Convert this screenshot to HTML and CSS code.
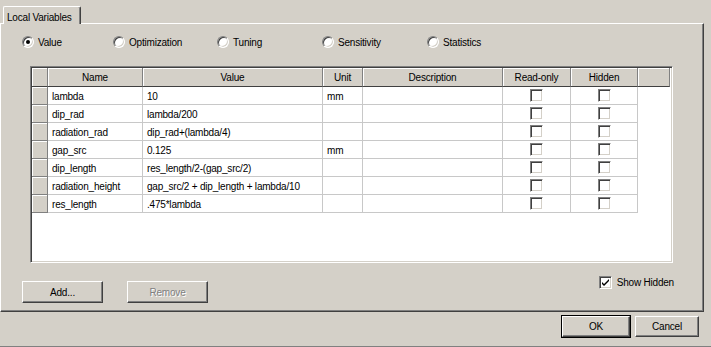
FILE: index.html
```html
<!DOCTYPE html>
<html>
	<head>
		<meta charset="UTF-8">
		<title>Local Variables</title>
		<link rel="stylesheet" href="styles.css">
	</head>
	<body>
		<div class="dialog">
			<div class="tabs">
				<div class="tab">Local Variables</div>
			</div>
			<div class="panel">
				<div class="modes">
					<label class="mode mode-value"><span class="radio checked"></span>Value</label>
					<label class="mode mode-opt"><span class="radio"></span>Optimization</label>
					<label class="mode"><span class="radio"></span>Tuning</label>
					<label class="mode"><span class="radio"></span>Sensitivity</label>
					<label class="mode"><span class="radio"></span>Statistics</label>
				</div>

				<div class="grid-box">
					<div class="grid">
						<div class="hd"></div>
						<div class="hd">Name</div>
						<div class="hd">Value</div>
						<div class="hd">Unit</div>
						<div class="hd">Description</div>
						<div class="hd">Read-only</div>
						<div class="hd">Hidden</div>
						<div class="hd"></div>

						<div class="rh"></div><div class="c">lambda</div><div class="c">10</div><div class="c">mm</div><div class="c"></div><div class="c chk"><span class="box"></span></div><div class="c chk"><span class="box"></span></div><div class="e"></div>
						<div class="rh"></div><div class="c">dip_rad</div><div class="c">lambda/200</div><div class="c"></div><div class="c"></div><div class="c chk"><span class="box"></span></div><div class="c chk"><span class="box"></span></div><div class="e"></div>
						<div class="rh"></div><div class="c">radiation_rad</div><div class="c">dip_rad+(lambda/4)</div><div class="c"></div><div class="c"></div><div class="c chk"><span class="box"></span></div><div class="c chk"><span class="box"></span></div><div class="e"></div>
						<div class="rh"></div><div class="c">gap_src</div><div class="c">0.125</div><div class="c">mm</div><div class="c"></div><div class="c chk"><span class="box"></span></div><div class="c chk"><span class="box"></span></div><div class="e"></div>
						<div class="rh"></div><div class="c">dip_length</div><div class="c">res_length/2-(gap_src/2)</div><div class="c"></div><div class="c"></div><div class="c chk"><span class="box"></span></div><div class="c chk"><span class="box"></span></div><div class="e"></div>
						<div class="rh"></div><div class="c">radiation_height</div><div class="c">gap_src/2 + dip_length + lambda/10</div><div class="c"></div><div class="c"></div><div class="c chk"><span class="box"></span></div><div class="c chk"><span class="box"></span></div><div class="e"></div>
						<div class="rh"></div><div class="c">res_length</div><div class="c">.475*lambda</div><div class="c"></div><div class="c"></div><div class="c chk"><span class="box"></span></div><div class="c chk"><span class="box"></span></div><div class="e"></div>
					</div>
				</div>

				<div class="actions">
					<button class="btn btn-add">Add...</button>
					<button class="btn btn-remove" disabled>Remove</button>
					<label class="show-hidden">
						<span class="box checked">
							<svg width="9" height="9" viewBox="0 0 9 9"><path d="M1 4 L3 6 L8 1 L8 3 L3 8 L1 6 Z" fill="#000"/></svg>
						</span>
						Show Hidden
					</label>
				</div>
			</div>

			<div class="footer">
				<button class="btn btn-ok">OK</button>
				<button class="btn btn-cancel">Cancel</button>
			</div>
		</div>
	</body>
</html>
```

FILE: styles.css
```css
body {
	margin: 0;
	width: 711px;
	height: 347px;
	overflow: hidden;
	background-color: #d4d0c8;
	font-family: "Liberation Sans", Arial, sans-serif;
	font-size: 10px;
	letter-spacing: -0.2px;
	color: #000;
}

.dialog {
	width: 711px;
	height: 347px;
	box-sizing: border-box;
	border-bottom: 1px solid #808080;
}

/* tab strip */
.tabs {
	height: 23px;
	display: flex;
	align-items: flex-end;
	padding-left: 3px;
}

.tab {
	position: relative;
	height: 18px;
	width: 78px;
	box-sizing: border-box;
	margin-bottom: -1px;
	padding: 4px 0 0 3px;
	background-color: #d4d0c8;
	border-top: 1px solid #fff;
	border-left: 1px solid #fff;
	border-right: 1px solid #404040;
	box-shadow: inset -1px 0 #808080;
	border-radius: 2px 2px 0 0;
	line-height: 13px;
	white-space: nowrap;
}

/* main panel */
.panel {
	width: 704px;
	height: 289px;
	box-sizing: border-box;
	border-top: 1px solid #fff;
	border-left: 1px solid #fff;
	border-right: 1px solid #404040;
	border-bottom: 1px solid #404040;
	box-shadow: inset -1px -1px #808080;
	display: flex;
	flex-direction: column;
}

.modes {
	height: 42px;
	box-sizing: border-box;
	padding: 12px 0 0 21px;
	display: flex;
}

.mode {
	width: 105px;
	height: 12px;
	display: flex;
	align-items: center;
	line-height: 13px;
}

.mode-value {
	width: 91px;
}

.mode-opt {
	width: 104px;
}

.radio {
	position: relative;
	width: 12px;
	height: 12px;
	box-sizing: border-box;
	border-radius: 50%;
	background-color: #fff;
	border: 1px solid;
	border-color: #808080 #fff #fff #808080;
	box-shadow: inset 1px 1px #404040, inset -1px -1px #d4d0c8;
	margin-right: 4px;
	flex: none;
}

.radio.checked::after {
	content: "";
	position: absolute;
	left: 3px;
	top: 3px;
	width: 4px;
	height: 4px;
	border-radius: 50%;
	background-color: #000;
}

/* variables grid */
.grid-box {
	margin-left: 29px;
	width: 643px;
	height: 197px;
	box-sizing: border-box;
	background-color: #fff;
	border: 1px solid;
	border-color: #808080 #fff #fff #808080;
	box-shadow: inset 1px 1px #404040, inset -1px -1px #d4d0c8;
	padding: 1px;
}

.grid {
	display: grid;
	grid-template-columns: 16px 95px 180px 40px 140px 68px 67px 32px;
	grid-template-rows: 19px repeat(7, 18px);
	line-height: 19px;
}

.grid > div {
	box-sizing: border-box;
	white-space: nowrap;
	overflow: hidden;
}

.hd {
	background-color: #d4d0c8;
	text-align: center;
	border-right: 1px solid #808080;
	border-bottom: 1px solid #404040;
	box-shadow: inset 1px 1px #fff;
	line-height: 20px;
}

.rh {
	background-color: #d4d0c8;
	border-right: 1px solid #808080;
	border-bottom: 1px solid #808080;
	box-shadow: inset 1px 1px #fff;
}

.c {
	border-right: 1px solid #c8c8c8;
	border-bottom: 1px solid #c8c8c8;
	padding-left: 4px;
}

.chk {
	display: flex;
	align-items: center;
	justify-content: center;
	padding-left: 0;
}

.box {
	display: flex;
	align-items: center;
	justify-content: center;
	width: 13px;
	height: 13px;
	box-sizing: border-box;
	background-color: #fff;
	border: 1px solid;
	border-color: #808080 #fff #fff #808080;
	box-shadow: inset 1px 1px #404040, inset -1px -1px #d4d0c8;
}

/* bottom of panel */
.actions {
	margin-top: 18px;
	height: 22px;
	display: flex;
	padding-left: 21px;
}

.btn {
	font-family: "Liberation Sans", Arial, sans-serif;
	font-size: 10px;
	letter-spacing: -0.2px;
	color: #000;
	background-color: #d4d0c8;
	border: 1px solid;
	border-color: #fff #404040 #404040 #fff;
	box-shadow: inset -1px -1px #808080;
	padding: 0;
	margin: 0;
	box-sizing: border-box;
	height: 22px;
}

.btn-add,
.btn-remove {
	width: 81px;
}

.btn-remove {
	margin-left: 24px;
	color: #808080;
	text-shadow: 1px 1px #fff;
}

.show-hidden {
	margin-left: auto;
	margin-right: 29px;
	margin-top: -5px;
	height: 13px;
	display: flex;
	align-items: center;
	line-height: 13px;
}

.show-hidden .box {
	margin-right: 5px;
}

.footer {
	display: flex;
	justify-content: flex-end;
	padding: 4px 12px 0 0;
	gap: 5px;
}

.btn-ok {
	width: 68px;
	height: 21px;
	outline: 1px solid #000;
}

.btn-cancel {
	width: 64px;
	height: 21px;
}
```
